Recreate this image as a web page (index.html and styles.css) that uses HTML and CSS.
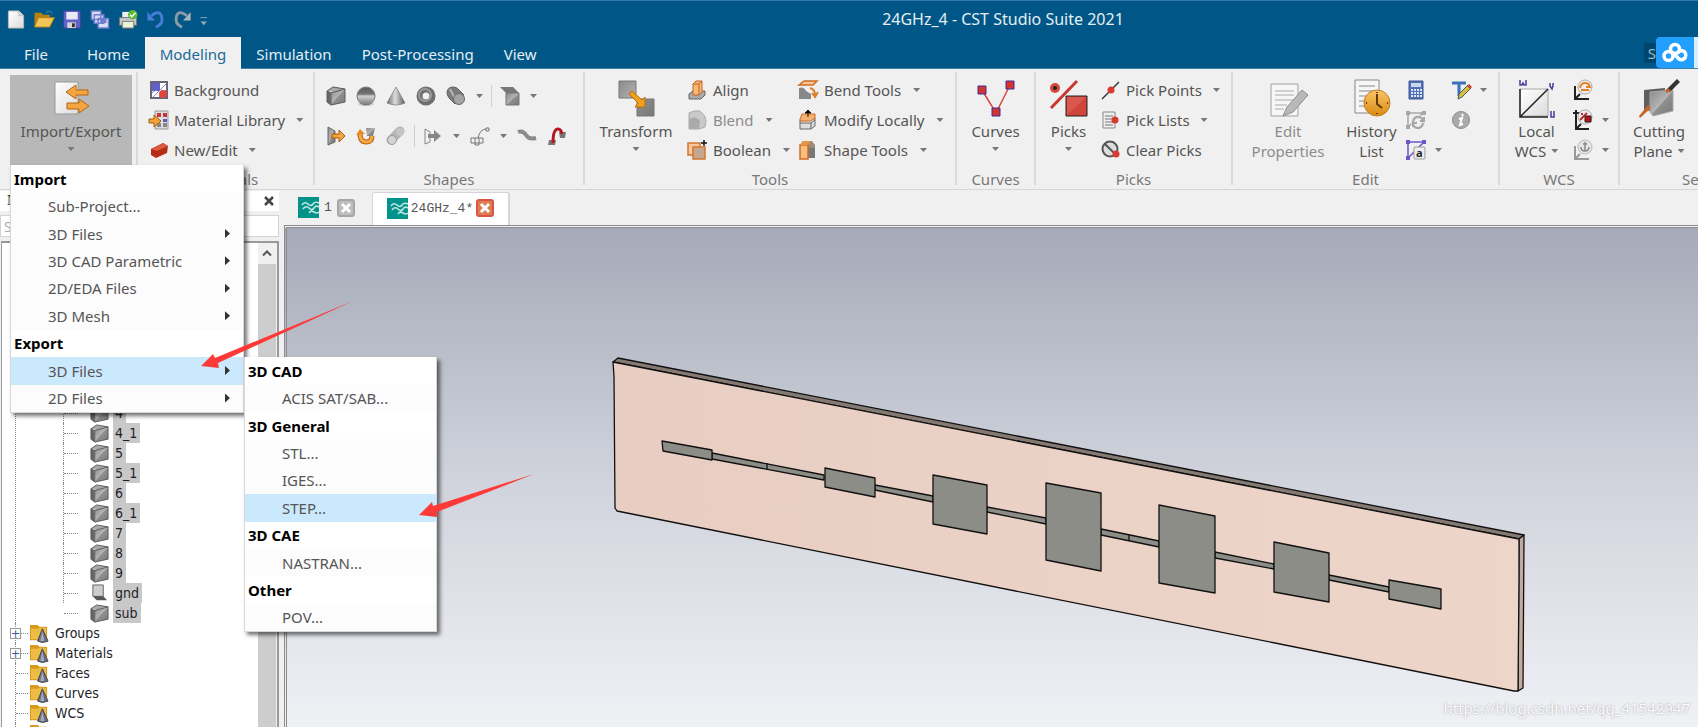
FILE: index.html
```
<!DOCTYPE html>
<html lang="en">
<head>
<meta charset="utf-8">
<title>24GHz_4 - CST Studio Suite 2021</title>
<link rel="stylesheet" href="styles.css">
</head>
<body>
<svg class="defs" aria-hidden="true">
  <defs>
    <linearGradient id="steel" x1="0" y1="0" x2="1" y2="1"><stop offset="0" stop-color="#8a8a8a"/><stop offset=".5" stop-color="#b4b4b4"/><stop offset=".52" stop-color="#909090"/><stop offset="1" stop-color="#777"/></linearGradient>
    <linearGradient id="paper" x1="0" y1="0" x2="1" y2="1"><stop offset="0" stop-color="#fff"/><stop offset="1" stop-color="#dcdcdc"/></linearGradient>
    <linearGradient id="cone" x1="0" x2="1"><stop offset="0" stop-color="#666"/><stop offset=".45" stop-color="#ddd"/><stop offset="1" stop-color="#5a5a5a"/></linearGradient>
    <linearGradient id="ball" x1="0" y1="0" x2="0" y2="1"><stop offset="0" stop-color="#555"/><stop offset=".4" stop-color="#777"/><stop offset=".5" stop-color="#d0d0d0"/><stop offset="1" stop-color="#777"/></linearGradient>
    <linearGradient id="gold" x1="0" y1="0" x2="0" y2="1"><stop offset="0" stop-color="#fbc569"/><stop offset="1" stop-color="#d98a12"/></linearGradient>
    <linearGradient id="plane" x1="0" x2="1"><stop offset="0" stop-color="#e8cec2"/><stop offset="1" stop-color="#eed5ca"/></linearGradient>
    <symbol id="cube" viewBox="0 0 20 20"><path d="M1 5 7 1 19 3 14 6z" fill="#a8a8a8"/><path d="M1 5 5 7v12l-4-3z" fill="#666"/><path d="M4 6 19 3v13L5 19z" fill="url(#steel)"/><path d="M1 5 7 1 19 3v13L5 19l-4-3zM1 5l4 2 14-4M5 7v12" fill="none" stroke="#5c5c5c"/></symbol>
    <symbol id="folder" viewBox="0 0 20 20"><path d="M0 1h8l2 2h8v14H0z" fill="#d79a1c"/><path d="M1 5h7l2-1h7v12H1z" fill="#eebb45"/><path d="M13 5 19 18q-6 3-11 0z" fill="#6a6f7c" stroke="#42444c"/><path d="M13 7 15 18h-4z" fill="#a6abc0"/></symbol>
    <symbol id="waves" viewBox="0 0 21 21"><path d="M0 0h21v21H0z" fill="#04938a"/><path d="M4 8q3-4 6-1t5 0 6-1M5 12q3-4 6-1t5 0 5-1M11 16q2-3 5-1t5 0" fill="none" stroke="#bfe8e2" stroke-width="1.6"/></symbol>
  </defs>
</svg>

<header class="titlebar">
  <div class="quick">
    <button aria-label="New"><svg viewBox="0 0 20 20"><path d="M2 1h11l5 5v13H2z" fill="url(#paper)" stroke="#b9b9b9"/><path d="M13 1v5h5" fill="#ddd" stroke="#bbb"/></svg></button>
    <button aria-label="Open"><svg viewBox="0 0 20 20"><path d="M0 3h7l2 2h7v13H0z" fill="#b8820e"/><path d="M4 8h17l-5 10H0z" fill="#f3c457" stroke="#b07a10"/><path d="M12 3q4-4 7 1" stroke="#5b87a3" fill="none"/></svg></button>
    <button aria-label="Save"><svg viewBox="0 0 20 20"><path d="M1 1h18v18H1z" fill="#6160c4" stroke="#3f3f9d"/><path d="M4 2h12v8H4z" fill="#e9e9f8"/><path d="M5 13h9v6H5z" fill="#d5d5d5"/><path d="M10 14h3v4h-3z" fill="#333"/></svg></button>
    <button aria-label="Save all"><svg viewBox="0 0 20 20" fill="#d9def5" stroke="#6f7bcb" stroke-width="1.5"><path d="M1 1h10v9H1zM4 5h10v9H4zM8 9h11v10H8z"/><path d="M11 10h5v3h-5z" fill="#6f7bcb"/></svg></button>
    <button aria-label="Print"><svg viewBox="0 0 20 20"><path d="M4 2h10v6H4z" fill="#eee"/><path d="M1 8h18v8H1z" fill="#c9c9c9" stroke="#777"/><path d="M4 12h12v7H4z" fill="#e9f3d8" stroke="#777"/><circle cx="15" cy="5" r="5" fill="#5eb83a"/><path d="m12 5 2 2 4-4" stroke="#fff" fill="none" stroke-width="1.5"/></svg></button>
    <button aria-label="Undo"><svg viewBox="0 0 20 20"><path d="M5 6q9-7 11 1t-6 11" fill="none" stroke="#467fd8" stroke-width="3"/><path d="M1 2v9h8z" fill="#467fd8"/></svg></button>
    <button aria-label="Redo"><svg viewBox="0 0 20 20"><path d="M13 6Q4-1 2 7t6 11" fill="none" stroke="#8b9ca8" stroke-width="3"/><path d="M17 2v9H9z" fill="#a9b3ba"/></svg></button>
    <button class="customize" aria-label="Customize toolbar"><svg viewBox="0 0 20 20"><path d="M2 8h7" stroke="#8fa9b8"/><path d="M2 12h7l-3.500 4z" fill="#8fa9b8"/></svg></button>
  </div>
  <h1>24GHz_4 - CST Studio Suite 2021</h1>
</header>

<nav class="tabs">
  <a class="file" href="#">File</a><a href="#">Home</a><a class="current" href="#">Modeling</a><a href="#">Simulation</a><a href="#">Post-Processing</a><a href="#">View</a>
  <div class="search"><span>S</span></div>
  <button class="cloud" aria-label="Cloud"><svg viewBox="0 0 26 20" fill="none" stroke="#fff" stroke-width="3.500"><circle cx="13" cy="6" r="4.500"/><circle cx="6.500" cy="13" r="4.500"/><path d="m10 9 7 7a4.500 4.500 0 1 0-2-5"/></svg></button>
</nav>

<section class="ribbon">
  <div class="group exchange">
    <div class="tools">
      <button class="big open"><svg viewBox="0 0 36 36"><path d="M2 2h23v32H2z" fill="url(#paper)" stroke="#999"/><path d="M35 10v5H23v4l-10-7 10-7v5zM14 23h12v-4l10 7-10 7v-4H14z" fill="#f3a63f" stroke="#b76512"/></svg><span>Import/Export</span><i class="caret"></i></button>
    </div>
    <div class="menu main-menu">
      <h2>Import</h2>
      <button>Sub-Project...</button>
      <button class="more">3D Files</button>
      <button class="more">3D CAD Parametric</button>
      <button class="more">2D/EDA Files</button>
      <button class="more">3D Mesh</button>
      <h2>Export</h2>
      <div class="parent">
        <button class="more hot">3D Files</button>
        <div class="menu sub-menu">
          <h2>3D CAD</h2>
          <button>ACIS SAT/SAB...</button>
          <h2>3D General</h2>
          <button>STL...</button>
          <button>IGES...</button>
          <button class="hot">STEP...</button>
          <h2>3D CAE</h2>
          <button>NASTRAN...</button>
          <h2>Other</h2>
          <button>POV...</button>
        </div>
      </div>
      <button class="more">2D Files</button>
    </div>
  </div>

  <div class="group materials">
    <div class="tools">
      <div class="col">
        <button class="small"><svg viewBox="0 0 20 20"><path d="M2 2h16v16H2z" fill="#fff" stroke="#667" stroke-width="2"/><path d="M3 3h8v8H3z" fill="#6360c8"/><path d="m4 17 13-13M10 17l7-7M3 13l4-3" stroke="#8885ce"/><circle cx="14" cy="14" r="4" fill="#e0463c"/></svg><span>Background</span></button>
        <button class="small"><svg viewBox="0 0 20 20"><path d="M6 1h13v18H6z" fill="#ddd" stroke="#999"/><path d="M8 3h4v4H8zM14 3h4v4h-4z" fill="#c8343c"/><path d="M14 9h4v3h-4z" fill="#5a5ac4"/><path d="M8 13h4v4H8zM14 13h4v4h-4z" fill="#888"/><path d="M0 9h5V5l7 6-7 6v-4H0z" fill="#f2a33a" stroke="#a85c10"/></svg><span>Material Library</span><i class="caret"></i></button>
        <button class="small"><svg viewBox="0 0 20 20"><path d="M2 9 14 3l5 3-1 7-11 5-5-3z" fill="#b72a15"/><path d="M2 9 14 3l5 3L8 11z" fill="#d95a41"/></svg><span>New/Edit</span><i class="caret"></i></button>
      </div>
    </div>
    <h3>Materials</h3>
  </div>

  <div class="group shapes">
    <div class="tools rows">
      <div class="row">
        <button aria-label="Brick"><svg><use href="#cube"/></svg></button>
        <button aria-label="Sphere"><svg viewBox="0 0 20 20"><ellipse cx="10" cy="18" rx="8" ry="2" fill="#ccc"/><circle cx="10" cy="10" r="9" fill="url(#ball)" stroke="#777"/></svg></button>
        <button aria-label="Cone"><svg viewBox="0 0 20 20"><path d="M10 1 19 17q-9 4-18 0z" fill="url(#cone)" stroke="#777" stroke-width=".7"/></svg></button>
        <button aria-label="Torus"><svg viewBox="0 0 20 20"><circle cx="10" cy="10" r="6.500" fill="none" stroke="#6e6e6e" stroke-width="6"/><circle cx="9" cy="9" r="6" fill="none" stroke="#999" stroke-width="2"/></svg></button>
        <button aria-label="Cylinder"><svg viewBox="0 0 20 20"><path d="M1 6Q2 1 7 1q4 0 6 3l5 5-9 9-6-6q-2-3-2-6z" fill="#7c7c7c" stroke="#606060"/><path d="m4 3 6 11" stroke="#b5b5b5" stroke-width="2"/><circle cx="13" cy="13" r="5.500" fill="#a3a3a3" stroke="#6c6c6c"/></svg></button>
        <i class="caret"></i><i class="rule"></i>
        <button aria-label="Extrude face"><svg viewBox="0 0 20 20"><path d="M0 1h13l6 6H6z" fill="#777"/><path d="M6 7h13v12H6z" fill="url(#steel)" stroke="#777"/></svg></button>
        <i class="caret"></i>
      </div>
      <div class="row">
        <button aria-label="Extrude"><svg viewBox="0 0 20 20"><path d="M2 1 9 5v11l-7 3z" fill="url(#steel)" stroke="#666"/><path d="M6 8h7V4l6 6-6 6v-4H6z" fill="#f2a33a" stroke="#a85c10"/></svg></button>
        <button aria-label="Rotate"><svg viewBox="0 0 20 20"><path d="M10 2h9l-2 8h-6z" fill="url(#steel)"/><path d="M4 7q0 9 6 9t6-6" fill="none" stroke="#b9640e" stroke-width="5"/><path d="M4 7q0 9 6 9t6-6" fill="none" stroke="#f4aa45" stroke-width="3"/><path d="M0 9 4 3l5 5z" fill="#e58c27"/></svg></button>
        <button aria-label="Loft"><svg viewBox="0 0 20 20"><path d="m5 14 9-9" stroke="#b5b5b5" stroke-width="9" stroke-linecap="round"/><circle cx="6" cy="14" r="4.500" fill="#d3d3d3" stroke="#999"/><circle cx="14" cy="6" r="4" fill="#c4c4c4"/></svg></button>
        <i class="rule"></i>
        <button aria-label="Extrude curve"><svg viewBox="0 0 20 20"><path d="m2 3 5 3v10l-5 2z" fill="none" stroke="#888"/><path d="M5 8h6V4l7 6-7 6v-4H5z" fill="#888"/></svg></button>
        <i class="caret"></i>
        <button aria-label="Curve"><svg viewBox="0 0 20 20" fill="none" stroke="#777"><path d="M1 12h12v5H1zM5 12v7h4v-7M8 12q2-9 8-9M16 2h3v3h-3z"/></svg></button>
        <i class="caret"></i>
        <button aria-label="Wire"><svg viewBox="0 0 20 20"><path d="M1 6q5-2 8 3t10 3" fill="none" stroke="#8b8b8b" stroke-width="4"/></svg></button>
        <button aria-label="Bond wire"><svg viewBox="0 0 20 20"><path d="M2 14h7l-1 5H1zM12 6h7l-1 6h-5z" fill="#777"/><path d="M6 17Q6 3 11 3q3 0 4 5" fill="none" stroke="#b41720" stroke-width="3"/></svg></button>
      </div>
    </div>
    <h3>Shapes</h3>
  </div>

  <div class="group transform">
    <div class="tools">
      <button class="big"><svg viewBox="0 0 36 36"><path d="M1 1h17v17H1zM19 19h17v17H19z" fill="url(#steel)" stroke="#777"/><path d="m11 14 3-3 10 9 3-3v10H17l3-4z" fill="#efa11b" stroke="#bb6d0e"/></svg><span>Transform</span><i class="caret"></i></button>
      <div class="col">
        <button class="small"><svg viewBox="0 0 20 20"><path d="m2 14 4-3h12v4l-4 4H2z" fill="#aaa" stroke="#666"/><path d="M6 4 9 1h6v11l-3 3H6z" fill="#f8b87a" stroke="#c3621a"/><path d="M6 4h6v11M12 4l3-3" fill="none" stroke="#c3621a"/></svg><span>Align</span></button>
        <button class="small off"><svg viewBox="0 0 20 20"><path d="M2 3 7 1h6q6 4 6 10l-1 6-6 2H2z" fill="#c9c9c9" stroke="#aaa"/><path d="M2 9q7-4 11 2l-1 8H2z" fill="#ababab"/></svg><span>Blend</span><i class="caret"></i></button>
        <button class="small"><svg viewBox="0 0 20 20"><path d="M1 3h12v12H1z" fill="#f7c79e" stroke="#d4762c" stroke-width="1.5"/><path d="M6 7h12v12H6z" fill="#c4a78e" stroke="#d4762c" stroke-width="1.500"/><path d="M17 0v6M14 3h6" stroke="#111" stroke-width="1.500"/></svg><span>Boolean</span><i class="caret"></i></button>
      </div>
      <div class="col second">
        <button class="small"><svg viewBox="0 0 20 20"><path d="M1 5 6 1h13l-4 4z" fill="#f9c797" stroke="#cf6c20" stroke-width="1.500"/><path d="M1 8q5-2 7 3l5 3v5H1z" fill="#888"/><path d="M12 8q5 1 5 7m-3-2 3 4 3-5" fill="none" stroke="#dc7e28" stroke-width="2"/></svg><span>Bend Tools</span><i class="caret"></i></button>
        <button class="small"><svg viewBox="0 0 20 20"><path d="m2 10 3-2h12v8l-4 3H2zM2 13h11l4-3M13 19v-6" fill="#ddd" stroke="#666"/><path d="m2 9 2-5h13v4l-4 3H2z" fill="#f5b273" stroke="#cf6c20"/><path d="M10 7V1M7 3l3-3 3 3z" stroke="#111"/></svg><span>Modify Locally</span><i class="caret"></i></button>
        <button class="small"><svg viewBox="0 0 20 20"><path d="M10 4l7 1v13h-7z" fill="#777"/><path d="m2 5 3-4h9l3 4v3H2z" fill="#9c8a7a"/><path d="M2 5h8v14H2z" fill="#f8bd80" stroke="#cf6c20" stroke-width="1.500"/><path d="m2 5 3-4h8l-3 4z" fill="#e79448"/></svg><span>Shape Tools</span><i class="caret"></i></button>
      </div>
    </div>
    <h3>Tools</h3>
  </div>

  <div class="group curves">
    <div class="tools">
      <button class="big"><svg viewBox="0 0 36 36"><path d="M4 10 18 33 32 5" fill="none" stroke="#d5463c" stroke-width="1.500"/><path d="M0 6h8v8H0zM28 1h8v8h-8zM14 28h8v8h-8z" fill="#d3352c" stroke="#3a2d9e"/></svg><span>Curves</span><i class="caret"></i></button>
    </div>
    <h3>Curves</h3>
  </div>

  <div class="group picks">
    <div class="tools">
      <button class="big"><svg viewBox="0 0 36 36"><path d="M0 28 26 1" stroke="#c9382f" stroke-width="3"/><circle cx="4" cy="8" r="5" fill="#d8473d"/><circle cx="4" cy="8" r="2" fill="#222"/><path d="M15 16h21v20H15z" fill="#cf453b" stroke="#222"/><path d="M16 17h19L16 35z" fill="#d9594f"/></svg><span>Picks</span><i class="caret"></i></button>
      <div class="col">
        <button class="small"><svg viewBox="0 0 20 20"><path d="M1 19 18 2" stroke="#333" stroke-width="1.500"/><circle cx="10" cy="10" r="3.500" fill="#d63a30"/></svg><span>Pick Points</span><i class="caret"></i></button>
        <button class="small"><svg viewBox="0 0 20 20"><path d="M2 2h12v16H2z" fill="#eee" stroke="#888"/><path d="M4 6h8M4 9h8M4 12h8M4 15h8" stroke="#777"/><circle cx="14" cy="10" r="3.500" fill="#d63a30"/></svg><span>Pick Lists</span><i class="caret"></i></button>
        <button class="small"><svg viewBox="0 0 20 20"><circle cx="9" cy="9" r="7.500" fill="#ddd" stroke="#555" stroke-width="2"/><path d="m4 4 10 10" stroke="#555" stroke-width="2"/><circle cx="15" cy="14" r="3.500" fill="#d63a30"/></svg><span>Clear Picks</span></button>
      </div>
    </div>
    <h3>Picks</h3>
  </div>

  <div class="group edit">
    <div class="tools">
      <button class="big off"><svg viewBox="0 0 36 36"><path d="M1 4h27v32H1z" fill="#f6f6f6" stroke="#a0a0a0"/><path d="M5 11h19M5 15h19M5 20h19M5 25h12M5 29h9" stroke="#aaa"/><path d="M13 36l4-9 15-17 6 5-15 17z" fill="#b9b9b9" stroke="#8c8c8c"/></svg><span>Edit<br>Properties</span></button>
      <button class="big history"><svg viewBox="0 0 36 36"><path d="M1 0h24v33H1z" fill="#f6f6f6" stroke="#888"/><path d="M5 6h16M5 11h16M5 16h9M5 21h5M5 26h5" stroke="#888"/><circle cx="23" cy="23" r="13" fill="url(#gold)" stroke="#c47c22"/><path d="M23 14v10l5 4" fill="none" stroke="#643808" stroke-width="2"/><path d="M23 12v1M23 33v1M12 23h1M33 23h1" stroke="#643808" stroke-width="2"/></svg><span>History<br>List</span></button>
      <div class="col">
        <button class="small" aria-label="Calculator"><svg viewBox="0 0 20 20"><path d="M3 1h14v18H3z" fill="#5370b4" stroke="#3c5795"/><path d="M5 3h10v4H5z" fill="#c9d6ee"/><path d="M5 10h11M5 13h11M5 16h11" stroke="#dce4f5" stroke-width="2" stroke-dasharray="2 1"/></svg></button>
        <button class="small off" aria-label="Update"><svg viewBox="0 0 20 20" fill="none" stroke="#a5a5a5" stroke-width="2"><path d="M2 17V3h15M2 17 17 3" stroke-width="1.500"/><path d="M0 1h4v4H0zM16 1h4v4h-4zM0 15h4v4H0z" fill="#a5a5a5" stroke="none"/><circle cx="12" cy="12" r="6" fill="#eee" stroke="#ddd"/><path d="M7 12q1-5 5-5t5 4M17 13q-1 5-5 5t-5-4M14 11h4V7M11 13H7v4"/></svg></button>
        <button class="small" aria-label="Parameters"><svg viewBox="0 0 20 20"><path d="M2 18V2h16L2 18" fill="none" stroke="#6a57c4" stroke-width="1.500"/><path d="M0 0h4v4H0zM16 0h4v4h-4zM0 16h4v4H0z" fill="#6a57c4"/><rect x="8" y="7" width="11" height="12" rx="1" fill="#eee" stroke="#999"/><text x="10" y="17" class="glyph">a</text></svg><i class="caret"></i></button>
      </div>
      <div class="col third">
        <button class="small" aria-label="Rename"><svg viewBox="0 0 20 20"><path d="M1 3h14M8 3v13" fill="none" stroke="#3b73b9" stroke-width="3"/><path d="m7 19 1-5 9-9 3 3-9 9z" fill="#d0c243" stroke="#555"/><path d="m16 6 2-2 3 3-2 2z" fill="#c6423a"/></svg><i class="caret"></i></button>
        <button class="small off" aria-label="Information"><svg viewBox="0 0 20 20"><circle cx="10" cy="10" r="8.500" fill="#aaa" stroke="#8e8e8e"/><path d="M12 4 11 6M8 9l3-1-2 7 3-1" fill="none" stroke="#fff" stroke-width="2"/></svg></button>
      </div>
    </div>
    <h3>Edit</h3>
  </div>

  <div class="group wcs">
    <div class="tools">
      <button class="big"><svg viewBox="0 0 36 36"><path d="M1 9h28v27H1z" fill="url(#paper)" stroke="#aaa"/><path d="M1 9v28h28M1 37 29 9" fill="none" stroke="#222" stroke-width="1.500"/><g fill="none" stroke="#473a9e" stroke-width="1.500"><path d="M1 0v5h2l1-2 1 2h2V0M31 3v3l2 3 1-3V3M32 31v6h3v-6"/></g></svg><span>Local<br>WCS<i class="caret"></i></span></button>
      <div class="col">
        <button class="small" aria-label="Rotate WCS"><svg viewBox="0 0 20 20"><path d="M2 6v13h14M2 19l5-5" fill="none" stroke="#222" stroke-width="2"/><circle cx="12" cy="7" r="7" fill="#eee" stroke="#aaa"/><path d="M7 8q1-5 5-5t5 4h-4M16 10H8" fill="none" stroke="#e58222" stroke-width="2"/></svg></button>
        <button class="small" aria-label="Align WCS"><svg viewBox="0 0 20 20"><path d="M3 0v19h13M0 3h8M3 19l5-5" fill="none" stroke="#222" stroke-width="2"/><circle cx="12" cy="7" r="7" fill="#eee" stroke="#aaa"/><path d="m7 10 7-7M8 4h2" stroke="#c22a2a" stroke-width="2"/><path d="M12 6h6v6h-6z" fill="#b11" stroke="#222"/></svg><i class="caret"></i></button>
        <button class="small" aria-label="Fix WCS"><svg viewBox="0 0 20 20"><path d="M2 6v13h14M2 19l5-5" fill="none" stroke="#999" stroke-width="2"/><circle cx="12" cy="7" r="7" fill="#e5e5e5" stroke="#bbb"/><path d="M12 2v9M8 7q0 4 4 4t4-4M10 4h4" fill="none" stroke="#888" stroke-width="1.500"/></svg><i class="caret"></i></button>
      </div>
    </div>
    <h3>WCS</h3>
  </div>

  <div class="group section">
    <div class="tools">
      <button class="big"><svg viewBox="0 0 36 36"><path d="M3 10 24 8v25L3 30z" fill="#5e5e5e"/><path d="M9 12 32 10v21l-20 5-3-4z" fill="url(#steel)" stroke="#aaa"/><path d="m25 10 11-11 3 3-10 10z" fill="#333"/><path d="m24 11 3-3 3 3-4 2zM-2 36l9-11 3 3-11 10z" fill="#c5642b"/></svg><span>Cutting<br>Plane<i class="caret"></i></span></button>
    </div>
    <h3>Sectional View</h3>
  </div>
</section>

<main class="workspace">
  <aside class="dock">
    <div class="dock-title"><span>Navigation Tree</span><button aria-label="Close"><svg viewBox="0 0 10 10"><path d="m1 1 8 8M9 1 1 9" stroke="#444" stroke-width="2.500"/></svg></button></div>
    <input type="text" placeholder="Search" aria-label="Search">
    <div class="tree">
      <div class="nodes">
        <ul class="solids">
          <li><svg><use href="#cube"/></svg><span>4</span></li>
          <li><svg><use href="#cube"/></svg><span>4_1</span></li>
          <li><svg><use href="#cube"/></svg><span>5</span></li>
          <li><svg><use href="#cube"/></svg><span>5_1</span></li>
          <li><svg><use href="#cube"/></svg><span>6</span></li>
          <li><svg><use href="#cube"/></svg><span>6_1</span></li>
          <li><svg><use href="#cube"/></svg><span>7</span></li>
          <li><svg><use href="#cube"/></svg><span>8</span></li>
          <li><svg><use href="#cube"/></svg><span>9</span></li>
          <li><svg viewBox="0 0 20 20"><path d="M3 1h11v12H3z" fill="#ccc" stroke="#666"/><path d="M3 13h11l4 4H7z" fill="#555"/></svg><span>gnd</span></li>
          <li><svg><use href="#cube"/></svg><span>sub</span></li>
        </ul>
        <ul class="folders">
          <li><button aria-label="Expand Groups">+</button><svg><use href="#folder"/></svg><span>Groups</span></li>
          <li><button aria-label="Expand Materials">+</button><svg><use href="#folder"/></svg><span>Materials</span></li>
          <li><svg><use href="#folder"/></svg><span>Faces</span></li>
          <li><svg><use href="#folder"/></svg><span>Curves</span></li>
          <li><svg><use href="#folder"/></svg><span>WCS</span></li>
          <li><svg><use href="#folder"/></svg><span>Anchor</span></li>
        </ul>
      </div>
      <div class="scroll"><svg viewBox="0 0 10 8"><path d="m1 6 4-4 4 4" fill="none" stroke="#555" stroke-width="2"/></svg></div>
    </div>
  </aside>

  <section class="document">
    <div class="doc-tabs">
      <div class="doc-tab"><svg><use href="#waves"/></svg><span>1</span><button aria-label="Close 1"><svg viewBox="0 0 10 10"><path d="m1 1 8 8M9 1 1 9" stroke="#fff" stroke-width="3"/></svg></button></div>
      <div class="doc-tab active"><svg><use href="#waves"/></svg><span>24GHz_4*</span><button aria-label="Close 24GHz_4"><svg viewBox="0 0 10 10"><path d="m1 1 8 8M9 1 1 9" stroke="#fff" stroke-width="3"/></svg></button></div>
    </div>
    <div class="viewport">
      <svg class="model" viewBox="287 228 1411 499" preserveAspectRatio="xMinYMin meet" role="img" aria-label="Series-fed patch antenna">
        <g stroke="#111" stroke-width="1.300" stroke-linejoin="round">
          <path d="M613 362 618 358 1524 535 1519 539z" fill="#857a73"/>
          <path d="M1519 539 1524 535 1523 688 1518 691z" fill="#c3aaa0"/>
          <path d="M613 362 1519 539V580L1518 691H1514L617 511 615 508 614 377z" fill="url(#plane)"/>
          <g fill="#8c8d87">
            <path d="M712 453 824 475v5L712 459zM875 485l58 11v6l-58-12zM987 507l59 11v6l-59-12zM1101 529l58 12v6l-58-12zM1215 552l59 12v5l-59-11zM1329 575l60 12v5l-60-12z"/>
            <path d="M767 463v6M1129 535v6"/>
            <path d="M662 441l50 9v10l-49-9zM825 468l50 10v19l-50-10zM933 475l54 10v49l-54-10zM1046 483l55 10v78l-55-11zM1159 505l56 11v77l-56-10zM1274 542l55 11v49l-55-10zM1389 580l52 9v20l-52-10z"/>
          </g>
        </g>
      </svg>
      <span class="watermark">https://blog.csdn.net/qq_41542947</span>
    </div>
  </section>
</main>

<svg class="pointer first" viewBox="201 301 152 68" aria-hidden="true"><path d="M201 366 213 354 215 358 353 301 218 363 219 368z" fill="#fd3a38"/></svg>
<svg class="pointer next" viewBox="419 474 115 44" aria-hidden="true"><path d="M419 515 432 502 433 506 534 474 437 512V517z" fill="#fd3a38"/></svg>
</body>
</html>
```
FILE: styles.css
```
* { box-sizing: border-box; }

body {
  margin: 0;
  height: 100vh;
  display: flex;
  flex-direction: column;
  overflow: hidden;
  position: relative;
  background: #f0f0f0;
  color: #555;
  font: 15px/20px "Noto Sans", "Open Sans", sans-serif;
}

button { margin: 0; padding: 0; border: 0; background: none; color: inherit; font: inherit; }
h1, h2, h3, ul { margin: 0; padding: 0; font-size: inherit; font-weight: normal; list-style: none; }
svg { display: block; flex: none; overflow: visible; }
.defs { position: absolute; width: 0; height: 0; }

.titlebar { flex: none; height: 37px; display: flex; align-items: center; background: #005787; border-top: 1px solid #2f7aa6; color: #e6eef3; }
.quick { flex: none; width: 308px; display: flex; gap: 8px; padding-left: 6px; }
.quick svg { width: 20px; height: 19px; }
.quick .customize { margin-left: -4px; }
.titlebar h1 { flex: 1; text-align: center; font-size: 16px; }

.tabs { flex: none; height: 32px; display: flex; background: #005787; border-bottom: 1px solid #3d7fa6; color: #e6eef3; }
.tabs a { padding: 0 15px; color: inherit; text-decoration: none; line-height: 34px; }
.tabs .file { padding: 0 24px; }
.tabs .current { height: 32px; background: #f0f0f0; color: #1a6a9a; }
.search { margin-left: auto; align-self: center; padding-left: 4px; background: #00466c; color: #9dbccd; }
.cloud { width: 42px; height: 31px; align-self: center; border-radius: 4px 0 0 4px; border-right: 4px solid #d8effd; background: #229fff; }
.cloud svg { width: 26px; height: 20px; margin: 0 auto; }

.ribbon { flex: none; height: 121px; display: flex; padding-top: 3px; border-bottom: 1px solid #d6d6d6; }
.group { flex: none; position: relative; display: flex; flex-direction: column; border-right: 2px solid #dadada; height: 113px; }
.tools { flex: none; height: 97px; display: flex; padding-top: 3px; }
.group h3 { height: 20px; text-align: center; color: #777; }
.exchange { width: 138px; padding-left: 10px; }
.materials { width: 177px; }
.shapes { width: 270px; }
.transform { width: 372px; }
.curves { width: 79px; }
.picks { width: 197px; }
.edit { width: 267px; }
.wcs { width: 120px; }
.section { flex: 1; min-width: 0; border: 0; }
.group.section h3 { height: 22px; padding-left: 62px; overflow: hidden; white-space: nowrap; text-align: left; }

.caret { flex: none; display: inline-block; width: 7px; height: 4px; background: #777; clip-path: polygon(0 0, 100% 0, 50% 100%); }
.big { display: flex; flex-direction: column; align-items: center; width: 96px; padding-top: 4px; }
.big svg { width: 36px; height: 38px; }
.big span { margin-top: 4px; }
.big > .caret { margin-top: 6px; }
.big span .caret { margin: 0 0 4px 5px; }
.open { width: 122px; height: 90px; background: #b8b8b8; }
.off { color: #8c8c8c; }
.col { display: flex; flex-direction: column; }
.small { display: flex; align-items: center; gap: 5px; height: 30px; white-space: nowrap; }
.small svg { width: 20px; height: 20px; }
.small .caret { margin-left: 6px; }
.glyph { font: bold 11px "Open Sans", sans-serif; fill: #222; }

.materials .col { padding-left: 11px; }
.rows { flex-direction: column; padding: 14px 0 0 11px; gap: 20px; }
.row { display: flex; align-items: center; gap: 10px; height: 20px; }
.row svg { width: 20px; height: 20px; }
.rule { width: 1px; height: 22px; margin: 0 -2px; background: #cfcfcf; }
.transform .big { margin: 0 3px; }
.transform .col { width: 111px; }
.transform .small { gap: 6px; }
.curves .big { width: 79px; }
.picks .big { width: 65px; }
.edit .big { width: 104px; padding-left: 6px; }
.edit .history { width: 69px; padding: 4px 0 0; }
.edit .col { width: 45px; }
.edit .small .caret, .wcs .small .caret { margin-left: 4px; }
.wcs .big { width: 73px; }
.section .big { flex: none; width: 78px; }

.menu { position: absolute; z-index: 5; display: grid; grid-auto-rows: 1fr; background: #fcfcfc; border: 1px solid #d8d8d8; border-top: 0; box-shadow: 3px 3px 4px rgba(0, 0, 0, .55); }
.main-menu { left: 10px; top: 93px; width: 234px; height: 248px; }
.sub-menu { left: 100%; top: 0; width: 193px; height: 275px; margin-left: 1px; }
.menu h2 { display: flex; align-items: center; padding-left: 3px; background: #fff; color: #000; font-weight: bold; }
.menu button { position: relative; width: 100%; height: 100%; padding-left: 37px; text-align: left; }
.menu .hot { background: #cbe9fd; }
.more::after { content: ""; position: absolute; right: 13px; top: 9px; width: 5px; height: 9px; background: #333; clip-path: polygon(0 0, 100% 50%, 0 100%); }
.parent { position: relative; }

.workspace { flex: 1; min-height: 0; display: flex; }
.dock { flex: none; width: 279px; display: flex; flex-direction: column; }
.dock-title { flex: none; height: 20px; margin-top: 1px; padding: 0 5px 0 7px; display: flex; align-items: center; justify-content: space-between; background: #fff; font: 14px "Liberation Serif", serif; color: #222; }
.dock-title svg { width: 10px; height: 10px; }
.dock input { flex: none; height: 22px; margin: 4px 0; padding: 0 3px; border: 1px solid #d4d4d4; background: #fff; font: 14px "Open Sans", sans-serif; }
.dock input::placeholder { color: #aaa; }
.tree { flex: 1; min-height: 0; display: flex; margin-left: 1px; overflow: hidden; background: #fff; border: 2px solid #999; border-width: 2px 2px 0 1px; }
.nodes { flex: 1; min-width: 0; padding-top: 160px; color: #1e1e28; font: 14px/20px "DejaVu Sans Condensed", "Noto Sans", sans-serif; }
.nodes li { display: flex; align-items: center; height: 20px; white-space: nowrap; }
.nodes svg { width: 19px; height: 19px; }
.solids { margin-left: 13px; border-left: 1px dotted #888; padding-left: 47px; }
.solids li { position: relative; border-left: 1px dotted #888; padding-left: 26px; }
.solids li:last-child { border-color: transparent; }
.solids li::before { content: ""; position: absolute; left: 0; top: 10px; width: 14px; border-top: 1px dotted #888; }
.solids span { margin-left: 4px; padding: 0 3px 0 2px; background: #c8c8c8; }
.folders li { position: relative; padding-left: 28px; }
.folders li::before { content: ""; position: absolute; left: 13px; top: 0; height: 20px; border-left: 1px dotted #888; }
.folders li::after { content: ""; position: absolute; left: 14px; top: 10px; width: 12px; border-top: 1px dotted #888; }
.folders button { position: absolute; z-index: 1; left: 8px; top: 5px; width: 11px; height: 11px; border: 1px solid #999; background: #fff; color: #33539c; font-size: 12px; line-height: 8px; }
.folders span { margin-left: 6px; }
.scroll { flex: none; width: 19px; background: #cdcdcd; border-right: 1px solid #f0f0f0; }
.scroll svg { width: 100%; height: 21px; padding: 6px 4px; background: #f0f0f0; }

.document { flex: 1; min-width: 0; margin-left: 5px; display: flex; flex-direction: column; }
.doc-tabs { flex: none; height: 35px; display: flex; align-items: flex-end; }
.doc-tab { display: flex; align-items: center; gap: 5px; height: 33px; padding: 0 17px 2px 14px; font: 13px "Liberation Mono", monospace; }
.doc-tab.active { gap: 3px; padding: 0 14px 2px; border: 1px solid #d5d5d5; border-bottom: 0; border-right-width: 2px; border-radius: 3px 3px 0 0; background: #fff; }
.doc-tab > svg { width: 21px; height: 21px; }
.doc-tab button { flex: none; width: 18px; height: 18px; padding: 2px; border: 2px solid #a6a6a6; border-radius: 3px; background: #bdbdbd; }
.doc-tab button svg { width: 10px; height: 10px; }
.doc-tab.active button { border-color: #db5545; background: #dd7d55; }
.viewport { flex: 1; min-height: 0; position: relative; overflow: hidden; border: 3px double #8c8c8c; border-width: 3px 0 0 3px; background: linear-gradient(#a4aab8, #d0d3dc 50%, #f0f1f5); }
.model { width: 100%; height: 100%; }
.watermark { position: absolute; right: 8px; bottom: 9px; color: #fbfbfd; text-shadow: 0 0 2px #999; }

.pointer { position: absolute; z-index: 9; pointer-events: none; }
.first { left: 201px; top: 301px; width: 152px; height: 68px; }
.next { left: 419px; top: 474px; width: 115px; height: 44px; }
```
